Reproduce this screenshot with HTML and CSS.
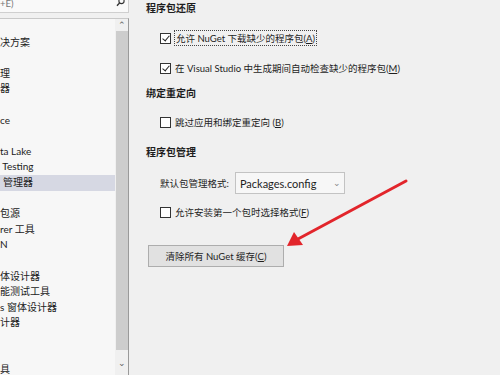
FILE: index.html
```html
<!DOCTYPE html>
<html lang="zh-CN">
<head>
    <meta charset="UTF-8">
    <title>NuGet 包管理器 - 选项</title>
    <link rel="stylesheet" href="styles.css">
</head>
<body>
    <div class="window">
        <!-- Left: options tree -->
        <div class="sidebar">
            <div class="search">
                <span class="search-text">+E)</span>
                <svg class="search-icon" width="9" height="8" viewBox="0 0 9 8">
                    <circle cx="5.5" cy="2" r="2.6" fill="none" stroke="#333" stroke-width="1.1"/>
                    <line x1="3.6" y1="3.9" x2="1" y2="6.8" stroke="#333" stroke-width="1.4"/>
                </svg>
            </div>
            <div class="tree">
                <ul class="tree-list">
                    <li></li>
                    <li>决方案</li>
                    <li></li>
                    <li>理</li>
                    <li>器</li>
                    <li></li>
                    <li>ce</li>
                    <li></li>
                    <li>ta Lake</li>
                    <li>&nbsp;Testing</li>
                    <li class="selected">管理器</li>
                    <li></li>
                    <li>包源</li>
                    <li>rer 工具</li>
                    <li>N</li>
                    <li></li>
                    <li>体设计器</li>
                    <li>能测试工具</li>
                    <li>s 窗体设计器</li>
                    <li>计器</li>
                    <li></li>
                    <li></li>
                    <li>具</li>
                </ul>
                <div class="scrollbar">
                    <span class="scroll-arrow">&#8963;</span>
                    <div class="scroll-thumb"></div>
                    <span class="scroll-arrow down">&#8964;</span>
                </div>
            </div>
        </div>

        <!-- Right: settings -->
        <div class="content">
            <h3 class="group-title">程序包还原</h3>
            <label class="check-row">
                <span class="checkbox checked"></span>
                <span class="focus">允许 NuGet 下载缺少的程序包(<u>A</u>)</span>
            </label>
            <label class="check-row">
                <span class="checkbox checked"></span>
                <span>在 Visual Studio 中生成期间自动检查缺少的程序包(<u>M</u>)</span>
            </label>

            <h3 class="group-title redirect">绑定重定向</h3>
            <label class="check-row after-title">
                <span class="checkbox"></span>
                <span>跳过应用和绑定重定向 (<u>B</u>)</span>
            </label>

            <h3 class="group-title manage">程序包管理</h3>
            <div class="format-row">
                <span>默认包管理格式:</span>
                <div class="select">
                    <span>Packages.config</span>
                    <span class="chevron">&#8964;</span>
                </div>
            </div>
            <label class="check-row tight">
                <span class="checkbox"></span>
                <span>允许安装第一个包时选择格式(<u>F</u>)</span>
            </label>

            <button class="clear-btn">清除所有 NuGet 缓存(<u>C</u>)</button>
        </div>
    </div>

    <!-- red annotation arrow -->
    <svg class="annotation" width="500" height="375" viewBox="0 0 500 375">
        <line x1="406" y1="181" x2="298" y2="239" stroke="#e2252b" stroke-width="3" stroke-linecap="round"/>
        <polygon points="287,246 294,232 303,245" fill="#e2252b"/>
    </svg>
</body>
</html>
```

FILE: styles.css
```css
* { margin: 0; padding: 0; box-sizing: border-box; }
body { width: 500px; height: 375px; overflow: hidden; background: #f0f0f0; color: #1e1e1e; font-family: Lato, "Noto Sans CJK SC", sans-serif; font-size: 9.5px; position: relative; }
.window { display: flex; height: 375px; }

.sidebar { width: 129px; display: flex; flex-direction: column; }
.search { height: 13px; background: #f9f9f9; border-bottom: 1px solid #cfcfcf; border-right: 1px solid #cfcfcf; display: flex; justify-content: space-between; align-items: flex-start; padding-right: 3px; }
.search-text { font-size: 9.5px; line-height: 8px; color: #777; }
.search-icon { margin-top: -1px; }
.tree { flex: 1; margin-top: 5px; background: #f7f7f7; border-top: 1px solid #c8c8c8; border-right: 1px solid #9a9a9a; display: flex; overflow: hidden; }
.tree-list { list-style: none; flex: 1; overflow: hidden; }
.tree-list li { height: 15.6px; line-height: 15.6px; white-space: nowrap; color: #222; font-size: 10px; }
.tree-list li.selected { background: #d6d8e3; padding-left: 3px; }
.scrollbar { width: 13px; background: #f0f0f0; display: flex; flex-direction: column; align-items: center; }
.scroll-arrow { height: 12px; line-height: 12px; font-size: 9px; color: #606060; }
.scroll-arrow.down { line-height: 8px; }
.scroll-thumb { width: 12px; height: 319px; background: #cdcdcd; margin-bottom: 9px; }

.content { flex: 1; padding-left: 17px; display: flex; flex-direction: column; align-items: flex-start; }
.group-title { font-size: 10px; font-weight: bold; line-height: 16px; height: 16px; }
.group-title.redirect { margin-top: 9px; }
.group-title.manage { margin-top: 14px; }
.check-row { display: flex; align-items: center; gap: 4px; height: 16px; margin: 14px 0 0 14px; white-space: nowrap; }
.check-row.after-title { margin-top: 13px; }
.check-row.tight { margin-top: 10px; }
.checkbox { width: 11px; height: 11px; border: 1px solid #333; background: #fff; position: relative; }
.checkbox.checked::after { content: ""; position: absolute; left: 3px; top: 0; width: 3px; height: 6px; border: solid #222; border-width: 0 1.3px 1.3px 0; transform: rotate(40deg); }
.focus { outline: 1px dotted #444; padding: 0 1px; }

.format-row { display: flex; align-items: center; gap: 6px; margin: 12px 0 0 14px; height: 22px; white-space: nowrap; }
.select { width: 110px; height: 22px; border: 1px solid #c3c3c3; background: #f7f7f7; display: flex; align-items: center; justify-content: space-between; padding: 0 3px 0 4px; font-size: 11px; }
.chevron { color: #888; font-size: 9px; line-height: 8px; }

.clear-btn { margin: 25px 0 0 2px; width: 136px; height: 22px; background: #e1e1e1; border: 1px solid #adadad; font-family: inherit; font-size: 9.5px; color: #1e1e1e; }

.annotation { position: absolute; left: 0; top: 0; pointer-events: none; }
```
